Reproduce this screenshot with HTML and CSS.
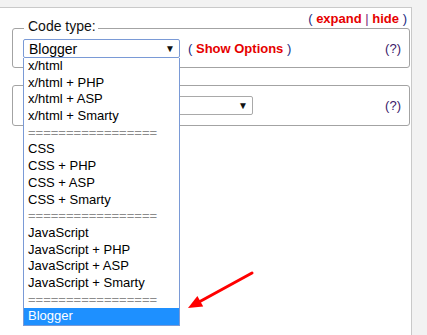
FILE: index.html
```html
<!DOCTYPE html>
<html>
<head>
<meta charset="utf-8">
<link rel="stylesheet" href="styles.css">
</head>
<body>
<div class="panel">
  <div class="toplinks"><span class="paren">(</span> <a class="lnk">expand</a> <span class="bar">|</span> <a class="lnk">hide</a> <span class="paren">)</span></div>
  <fieldset class="group first">
    <legend class="legend">Code type:</legend>
    <div class="row">
      <div class="left">
        <div class="selwrap">
          <div class="select focused"><span class="val">Blogger</span><span class="caret">&#9660;</span></div>
          <ul class="dropdown">
            <li class="opt">x/html</li>
            <li class="opt">x/html + PHP</li>
            <li class="opt">x/html + ASP</li>
            <li class="opt">x/html + Smarty</li>
            <li class="opt sep">=================</li>
            <li class="opt">CSS</li>
            <li class="opt">CSS + PHP</li>
            <li class="opt">CSS + ASP</li>
            <li class="opt">CSS + Smarty</li>
            <li class="opt sep">=================</li>
            <li class="opt">JavaScript</li>
            <li class="opt">JavaScript + PHP</li>
            <li class="opt">JavaScript + ASP</li>
            <li class="opt">JavaScript + Smarty</li>
            <li class="opt sep">=================</li>
            <li class="opt sel">Blogger</li>
          </ul>
        </div>
        <span class="opts"><span class="paren">(</span> <a class="lnk">Show Options</a> <span class="paren">)</span></span>
      </div>
      <span class="help">(?)</span>
    </div>
  </fieldset>
  <fieldset class="group second">
    <div class="row">
      <div class="left">
        <div class="select wide"><span class="val"></span><span class="caret">&#9660;</span></div>
      </div>
      <span class="help">(?)</span>
    </div>
  </fieldset>
  <svg class="arrow" width="427" height="335" viewBox="0 0 427 335">
    <line x1="252" y1="273" x2="199" y2="302" stroke="#f00" stroke-width="3" stroke-linecap="round"/>
    <polygon points="188,308 203.2,306.6 197.4,296" fill="#f00"/>
  </svg>
</div>
</body>
</html>
```

FILE: styles.css
```css
html, body {
  margin: 0;
  padding: 0;
}
body {
  background: #f2f2f2;
  font-family: "Liberation Sans", Arial, sans-serif;
  font-size: 13px;
  color: #000;
  height: 335px;
  overflow: hidden;
}
.panel {
  margin-top: 7px;
  width: 398px;
  padding: 0 1px 0 12px;
  min-height: 340px;
  background: #fff;
  border-top: 1px solid #c9c9c9;
  border-right: 1px solid #c9c9c9;
}
.toplinks {
  text-align: right;
  padding: 3px 3px 0 0;
  line-height: 15px;
  height: 15px;
  margin-bottom: -8px;
  font-size: 13px;
}
.paren {
  color: #1a2a80;
}
.bar {
  color: #7a1a7a;
}
.lnk {
  color: #e60000;
  font-weight: bold;
}
.group {
  margin: 0;
  border: 1px solid #a3a3a3;
  border-radius: 3px;
  min-width: 0;
}
.first {
  padding: 1px 8px 9px 10px;
}
.second {
  margin-top: 17px;
  padding: 10px 8px 10px 10px;
}
.legend {
  margin-left: 1px;
  padding: 0 2px 4px 4px;
  font-size: 14px;
  line-height: 16px;
  color: #111;
}
.row {
  display: flex;
  align-items: center;
  justify-content: space-between;
}
.left {
  display: flex;
  align-items: center;
}
.selwrap {
  position: relative;
}
.select {
  box-sizing: border-box;
  width: 157px;
  height: 19px;
  border: 1px solid #a9a9a9;
  border-radius: 2px;
  background: #fff;
  display: flex;
  align-items: center;
  justify-content: space-between;
  padding: 0 4px 0 5px;
  font-size: 14px;
}
.focused {
  border-color: #7a9ad6;
}
.wide {
  width: 230px;
}
.caret {
  font-size: 10px;
  line-height: 10px;
  color: #111;
  margin-top: 0;
}
.opts {
  margin-left: 8px;
}
.help {
  color: #3a1a6a;
  font-size: 13px;
  margin-right: 0;
}
.dropdown {
  position: absolute;
  left: 0;
  top: 100%;
  z-index: 5;
  box-sizing: border-box;
  width: 157px;
  margin: 0;
  padding: 0;
  list-style: none;
  background: #fff;
  border: 1px solid #7a9ad6;
  border-top: 0;
  font-size: 13px;
}
.opt {
  height: 16.69px;
  line-height: 16.69px;
  padding-left: 4px;
  white-space: nowrap;
  color: #000;
}
.sep {
  color: #8c8c8c;
}
.sel {
  background: #1e90ff;
  color: #fff;
}
.arrow {
  position: absolute;
  left: 0;
  top: 0;
  z-index: 10;
  pointer-events: none;
}
```
